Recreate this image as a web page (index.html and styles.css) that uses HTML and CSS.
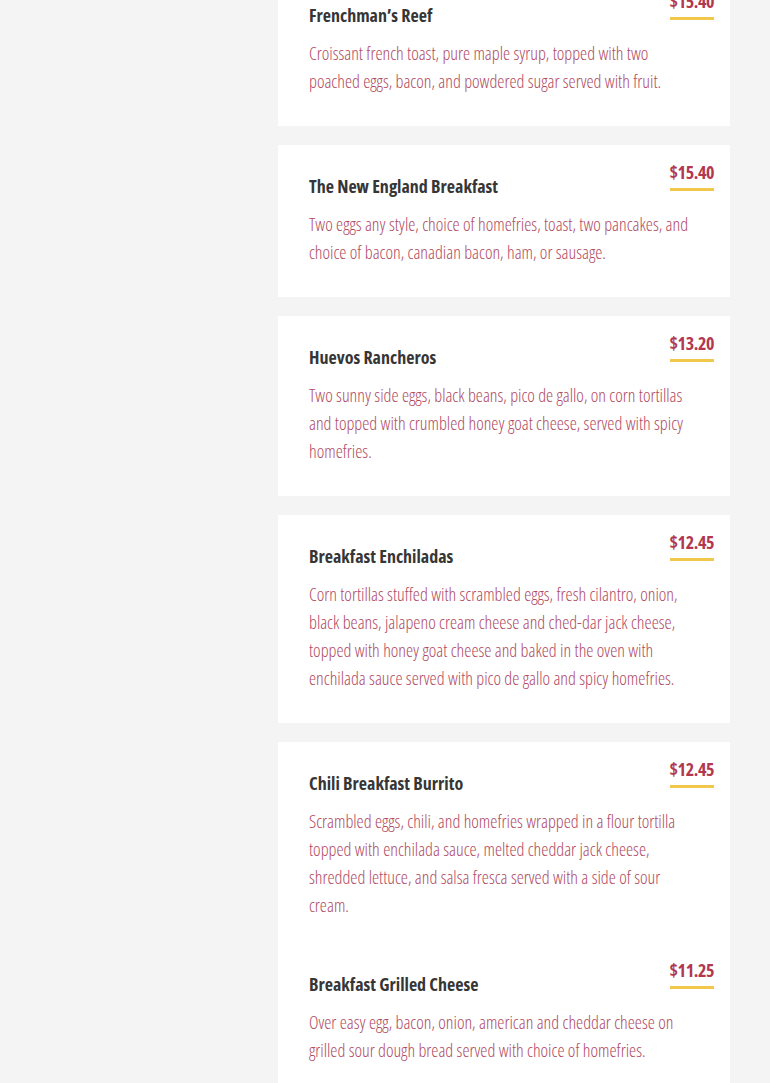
FILE: index.html
```html
<!DOCTYPE html>
<html lang="en">
<head>
<meta charset="utf-8">
<title>Breakfast Menu</title>
<link rel="stylesheet" href="styles.css">
</head>
<body>
<div class="page">
  <aside class="sidebar"></aside>
  <main class="menu">
    <section class="card">
      <article class="item">
        <header class="item-head">
          <h3 class="item-title">Frenchman’s Reef</h3>
          <span class="item-price">$15.40</span>
        </header>
        <p class="item-desc">Croissant french toast, pure maple syrup, topped with two poached eggs, bacon, and powdered sugar served with fruit.</p>
      </article>
    </section>
    <section class="card">
      <article class="item">
        <header class="item-head">
          <h3 class="item-title">The New England Breakfast</h3>
          <span class="item-price">$15.40</span>
        </header>
        <p class="item-desc">Two eggs any style, choice of homefries, toast, two pancakes, and choice of bacon, canadian bacon, ham, or sausage.</p>
      </article>
    </section>
    <section class="card">
      <article class="item">
        <header class="item-head">
          <h3 class="item-title">Huevos Rancheros</h3>
          <span class="item-price">$13.20</span>
        </header>
        <p class="item-desc">Two sunny side eggs, black beans, pico de gallo, on corn tortillas and topped with crumbled honey goat cheese, served with spicy homefries.</p>
      </article>
    </section>
    <section class="card">
      <article class="item">
        <header class="item-head">
          <h3 class="item-title">Breakfast Enchiladas</h3>
          <span class="item-price">$12.45</span>
        </header>
        <p class="item-desc">Corn tortillas stuffed with scrambled eggs, fresh cilantro, onion, black beans, jalapeno cream cheese and ched-dar jack cheese, topped with honey goat cheese and baked in the oven with enchilada sauce served with pico de gallo and spicy homefries.</p>
      </article>
    </section>
    <section class="card">
      <article class="item">
        <header class="item-head">
          <h3 class="item-title">Chili Breakfast Burrito</h3>
          <span class="item-price">$12.45</span>
        </header>
        <p class="item-desc">Scrambled eggs, chili, and homefries wrapped in a flour tortilla topped with enchilada sauce, melted cheddar jack cheese, shredded lettuce, and salsa fresca served with a side of sour cream.</p>
      </article>
      <article class="item">
        <header class="item-head">
          <h3 class="item-title">Breakfast Grilled Cheese</h3>
          <span class="item-price">$11.25</span>
        </header>
        <p class="item-desc">Over easy egg, bacon, onion, american and cheddar cheese on grilled sour dough bread served with choice of homefries.</p>
      </article>
    </section>
  </main>
</div>
</body>
</html>
```

FILE: styles.css
```css
html, body {
  margin: 0;
  padding: 0;
  background: #f4f4f4;
}
body {
  font-family: "Open Sans", "DejaVu Sans", sans-serif;
  font-stretch: 75%;
  overflow: hidden;
}
.page {
  display: grid;
  grid-template-columns: 278px 452px;
  margin-top: -26px;
}
.menu {
  display: flex;
  flex-direction: column;
  gap: 19px;
}
.card {
  background: #ffffff;
  padding: 15px 16px 31px 31px;
  display: flex;
  flex-direction: column;
  gap: 39px;
}
.item-head {
  display: flex;
  justify-content: space-between;
  align-items: flex-start;
}
.item-title {
  margin: 14px 0 0;
  font-size: 18px;
  line-height: 24px;
  font-weight: 700;
  color: #363636;
}
.item-price {
  font-size: 18px;
  line-height: 24px;
  font-weight: 700;
  letter-spacing: -0.4px;
  color: #b3374f;
  padding-bottom: 4px;
  border-bottom: 3px solid #f1c84b;
}
.item-desc {
  margin: 12px 0 0;
  padding-right: 20px;
  font-size: 18px;
  line-height: 28px;
  font-weight: 300;
  color: #b04a62;
}
```
